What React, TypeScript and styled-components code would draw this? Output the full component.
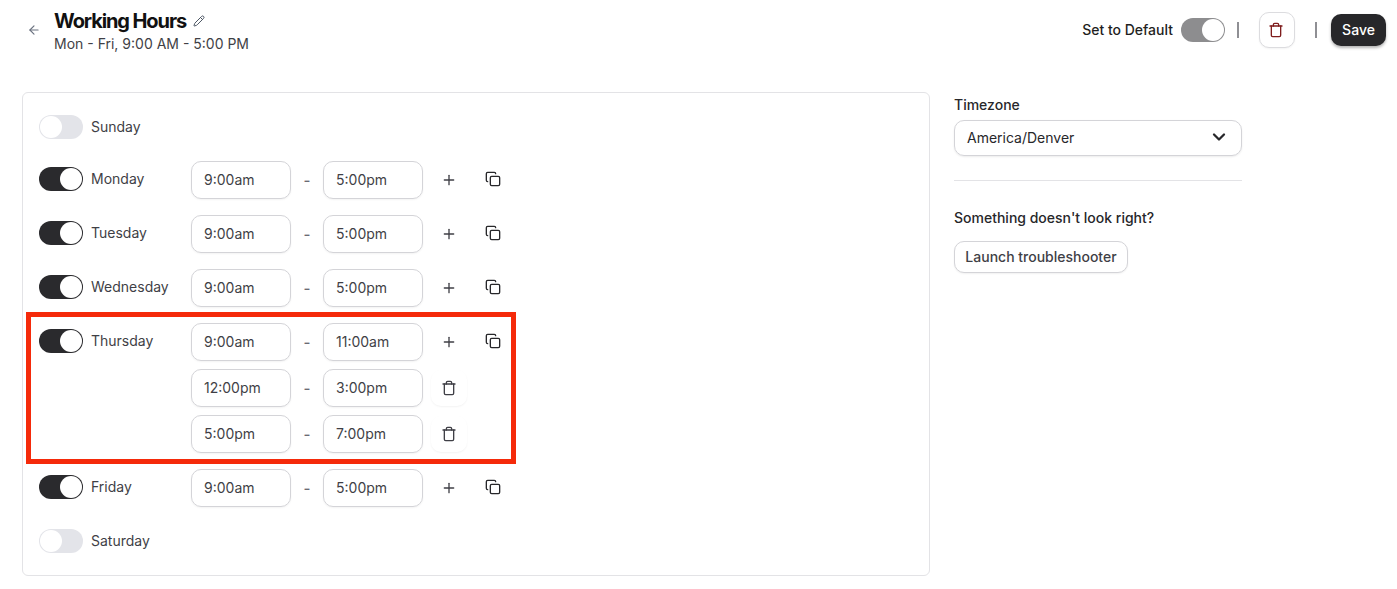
import { ArrowLeft, ChevronDown, Copy, Pencil, Plus, Trash } from "lucide-react";
import styled, { createGlobalStyle } from "styled-components";

const GlobalStyle = createGlobalStyle`
  html, body {
    margin: 0;
    background: #fff;
    font-family: Inter, "Liberation Sans", sans-serif;
    color: #1c1c1f;
  }
  * {
    box-sizing: border-box;
  }
`;

const Page = styled.div`
  position: relative;
  width: 1397px;
  height: 589px;
  overflow: hidden;
`;

const Header = styled.header`
  display: flex;
  align-items: flex-start;
  justify-content: space-between;
  height: 92px;
  padding: 12px 11px 0 27px;
`;

const TitleArea = styled.div`
  display: flex;
  align-items: center;
  gap: 13px;
  color: #6b7280;
`;

const BackIcon = styled(ArrowLeft)`
  margin-bottom: 6px;
`;

const TitleRow = styled.div`
  display: flex;
  align-items: center;
  gap: 7px;
  height: 20px;
  margin-top: -1px;
  color: #4b5563;
`;

const Title = styled.h1`
  margin: 0;
  font-size: 20px;
  line-height: 20px;
  font-weight: 700;
  letter-spacing: -1.1px;
  color: #111;
`;

const Subtitle = styled.div`
  margin-top: 3px;
  font-size: 14px;
  line-height: 20px;
  color: #3f3f46;
`;

const Actions = styled.div`
  display: flex;
  align-items: center;
  height: 36px;
`;

const DefaultLabel = styled.span`
  margin: 0 8px 2px 0;
  font-size: 14px;
  font-weight: 500;
  color: #1f1f22;
`;

const Divider = styled.span`
  width: 2px;
  height: 16px;
  margin: 0 20px 0 12px;
  background: #8f8f94;
`;

const DeleteButton = styled.button`
  display: flex;
  align-items: center;
  justify-content: center;
  width: 36px;
  height: 36px;
  padding: 0 2px 0 0;
  border: 1px solid #dcdcdf;
  border-radius: 10px;
  background: #fff;
  color: #7f1d1d;
  box-shadow: 0 1px 2px rgba(0, 0, 0, 0.05);
`;

const DeleteDivider = styled(Divider)`
  margin: 0 14px 0 20px;
`;

const SaveButton = styled.button`
  width: 55px;
  height: 32px;
  padding: 0 0 2px;
  border: 0;
  border-radius: 10px;
  background: #27272a;
  color: #fff;
  font: 500 14px Inter, sans-serif;
  box-shadow: 0 2px 3px rgba(0, 0, 0, 0.3);
`;

const Main = styled.main`
  display: flex;
  align-items: flex-start;
  gap: 24px;
  padding-left: 22px;
`;

const Card = styled.section`
  display: flex;
  flex-direction: column;
  gap: 16px;
  width: 908px;
  height: 484px;
  padding: 16px 16px 0;
  border: 1px solid #e3e3e6;
  border-radius: 6px;
`;

const DayRow = styled.div`
  display: flex;
  align-items: flex-start;
  min-height: 36px;
`;

const DayLabel = styled.label`
  display: flex;
  align-items: center;
  gap: 8px;
  width: 152px;
  height: 24px;
  margin-top: 6px;
  font-size: 14px;
  color: #3f3f46;
`;

const DayName = styled.span`
  margin-bottom: 2px;
`;

const Switch = styled.span<{ $on: boolean; $muted?: boolean }>`
  display: flex;
  flex-shrink: 0;
  justify-content: ${(p) => (p.$on ? "flex-end" : "flex-start")};
  align-items: center;
  width: 44px;
  height: 24px;
  padding: 1px;
  border-radius: 12px;
  background: ${(p) => (p.$muted ? "#8d8d8f" : p.$on ? "#2a2a2d" : "#e3e4e9")};

  &::after {
    content: "";
    width: 22px;
    height: 22px;
    border-radius: 50%;
    background: #fff;
  }
`;

const Slots = styled.div`
  display: flex;
  flex-direction: column;
  gap: 8px;
`;

const SlotRow = styled.div`
  display: flex;
  align-items: center;
`;

const TimeField = styled.div`
  display: flex;
  align-items: center;
  width: 100px;
  height: 38px;
  padding: 0 12px 2px;
  border: 1px solid #d4d4d8;
  border-radius: 10px;
  font-size: 14px;
  color: #3f3f46;
  box-shadow: 0 1px 2px rgba(0, 0, 0, 0.05);
`;

const Dash = styled.span`
  width: 32px;
  text-align: center;
  font-size: 15px;
  font-weight: 500;
  color: #6b6b73;
`;

const IconButton = styled.span<{ $raised?: boolean }>`
  display: flex;
  align-items: center;
  justify-content: center;
  width: 36px;
  height: 36px;
  margin-left: 8px;
  border-radius: 10px;
  color: #3f3f46;
  box-shadow: ${(p) => (p.$raised ? "0 1px 2px rgba(0, 0, 0, 0.05)" : "none")};
`;

const CopyButton = styled(IconButton)`
  padding-bottom: 2px;
  color: #27272a;
`;

const Sidebar = styled.aside`
  width: 288px;
  padding-top: 3px;
`;

const FieldLabel = styled.div`
  font-size: 14px;
  line-height: 20px;
  font-weight: 500;
  color: #27272a;
`;

const Select = styled.div`
  display: flex;
  align-items: center;
  justify-content: space-between;
  height: 36px;
  margin-top: 5px;
  padding: 0 12px 2px;
  border: 1px solid #d4d4d8;
  border-radius: 10px;
  font-size: 14px;
  color: #27272a;
  box-shadow: 0 1px 2px rgba(0, 0, 0, 0.08);
`;

const Rule = styled.hr`
  height: 1px;
  margin: 24px 0 27px;
  border: 0;
  background: #e3e3e6;
`;

const Troubleshoot = styled.button`
  display: block;
  width: 174px;
  height: 32px;
  margin-top: 13px;
  padding: 0 0 2px;
  border: 1px solid #d4d4d8;
  border-radius: 10px;
  background: #fff;
  font: 500 14px Inter, sans-serif;
  color: #3f3f46;
  box-shadow: 0 1px 2px rgba(0, 0, 0, 0.06);
`;

const Highlight = styled.div`
  position: absolute;
  left: 26px;
  top: 312px;
  width: 490px;
  height: 152px;
  border: 5px solid #f52a0a;
  pointer-events: none;
`;

type Day = {
  name: string;
  slots: [string, string][];
};

const days: Day[] = [
  { name: "Sunday", slots: [] },
  { name: "Monday", slots: [["9:00am", "5:00pm"]] },
  { name: "Tuesday", slots: [["9:00am", "5:00pm"]] },
  { name: "Wednesday", slots: [["9:00am", "5:00pm"]] },
  {
    name: "Thursday",
    slots: [
      ["9:00am", "11:00am"],
      ["12:00pm", "3:00pm"],
      ["5:00pm", "7:00pm"],
    ],
  },
  { name: "Friday", slots: [["9:00am", "5:00pm"]] },
  { name: "Saturday", slots: [] },
];

export default function App() {
  return (
    <Page>
      <GlobalStyle />
      <Header>
        <TitleArea>
          <BackIcon size={14} />
          <div>
            <TitleRow>
              <Title>Working Hours</Title>
              <Pencil size={12} />
            </TitleRow>
            <Subtitle>Mon - Fri, 9:00 AM - 5:00 PM</Subtitle>
          </div>
        </TitleArea>
        <Actions>
          <DefaultLabel>Set to Default</DefaultLabel>
          <Switch $on $muted />
          <Divider />
          <DeleteButton aria-label="Delete">
            <Trash size={16} />
          </DeleteButton>
          <DeleteDivider />
          <SaveButton>Save</SaveButton>
        </Actions>
      </Header>
      <Main>
        <Card>
          {days.map((day) => (
            <DayRow key={day.name}>
              <DayLabel>
                <Switch $on={day.slots.length > 0} />
                <DayName>{day.name}</DayName>
              </DayLabel>
              <Slots>
                {day.slots.map(([from, to], i) => (
                  <SlotRow key={from}>
                    <TimeField>{from}</TimeField>
                    <Dash>-</Dash>
                    <TimeField>{to}</TimeField>
                    {i === 0 ? (
                      <>
                        <IconButton>
                          <Plus size={16} />
                        </IconButton>
                        <CopyButton>
                          <Copy size={16} />
                        </CopyButton>
                      </>
                    ) : (
                      <IconButton $raised>
                        <Trash size={16} />
                      </IconButton>
                    )}
                  </SlotRow>
                ))}
              </Slots>
            </DayRow>
          ))}
        </Card>
        <Sidebar>
          <FieldLabel>Timezone</FieldLabel>
          <Select>
            America/Denver
            <ChevronDown size={20} strokeWidth={2.75} />
          </Select>
          <Rule />
          <FieldLabel>Something doesn't look right?</FieldLabel>
          <Troubleshoot>Launch troubleshooter</Troubleshoot>
        </Sidebar>
      </Main>
      <Highlight />
    </Page>
  );
}
